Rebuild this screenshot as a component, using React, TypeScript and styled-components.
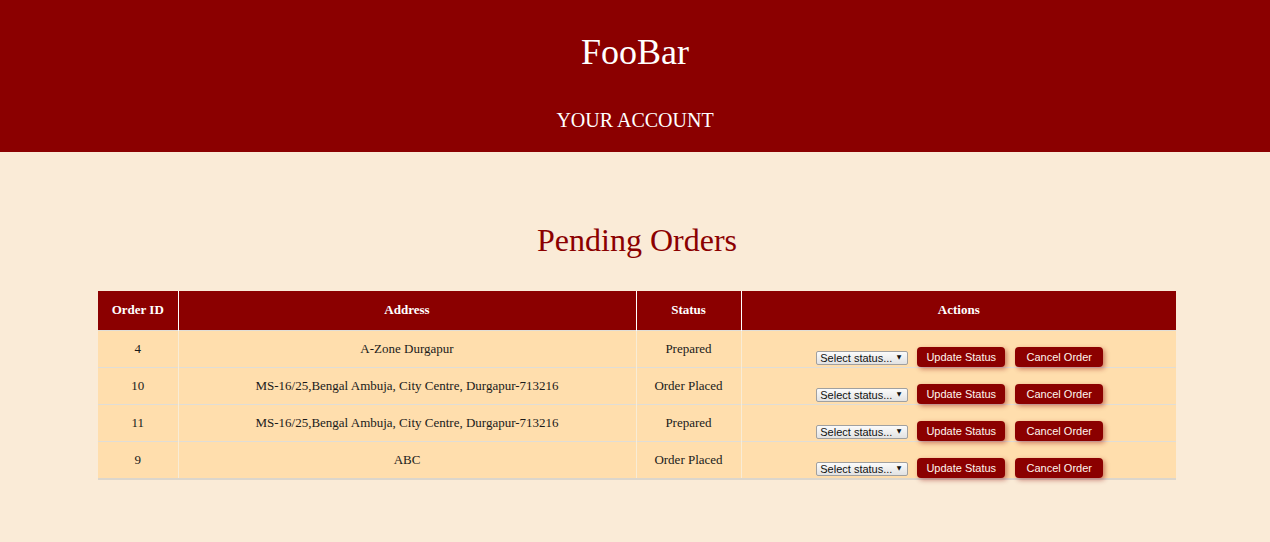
import React from "react";
import styled, { createGlobalStyle } from "styled-components";

interface Order {
  id: string;
  address: string;
  status: string;
}

const orders: Order[] = [
  { id: "4", address: "A-Zone Durgapur", status: "Prepared" },
  { id: "10", address: "MS-16/25,Bengal Ambuja, City Centre, Durgapur-713216", status: "Order Placed" },
  { id: "11", address: "MS-16/25,Bengal Ambuja, City Centre, Durgapur-713216", status: "Prepared" },
  { id: "9", address: "ABC", status: "Order Placed" },
];

const GlobalStyle = createGlobalStyle`
  body {
    margin: 0;
    background-color: #faebd7;
    font-family: "Liberation Serif", "Times New Roman", serif;
  }
`;

const App: React.FC = () => {
  return (
    <>
      <GlobalStyle />
      <Header>
        <Brand>FooBar</Brand>
        <NavLink>YOUR ACCOUNT</NavLink>
      </Header>
      <Main>
        <Title>Pending Orders</Title>
        <OrdersTable>
          <colgroup>
            <col style={{ width: 80 }} />
            <col style={{ width: 458 }} />
            <col style={{ width: 105 }} />
            <col style={{ width: 435 }} />
          </colgroup>
          <thead>
            <tr>
              <Th>Order ID</Th>
              <Th>Address</Th>
              <Th>Status</Th>
              <Th>Actions</Th>
            </tr>
          </thead>
          <tbody>
            {orders.map((order) => (
              <tr key={order.id}>
                <Td>{order.id}</Td>
                <Td>{order.address}</Td>
                <Td>{order.status}</Td>
                <ActionsTd>
                  <ActionsRow>
                    <SelectWrap>
                      <StatusSelect defaultValue="">
                        <option value="">Select status...</option>
                        <option value="prepared">Prepared</option>
                        <option value="delivered">Delivered</option>
                      </StatusSelect>
                      <Arrow>▼</Arrow>
                    </SelectWrap>
                    <ActionButton>Update Status</ActionButton>
                    <ActionButton>Cancel Order</ActionButton>
                  </ActionsRow>
                </ActionsTd>
              </tr>
            ))}
          </tbody>
        </OrdersTable>
      </Main>
    </>
  );
};

const Header = styled.header`
  background-color: #8b0000;
  color: #fff;
  text-align: center;
  padding: 32px 0 20px;
`;

const Brand = styled.h1`
  margin: 0;
  font-size: 36px;
  font-weight: normal;
  line-height: 40px;
`;

const NavLink = styled.div`
  margin-top: 36px;
  font-size: 20px;
  line-height: 24px;
`;

const Main = styled.main`
  padding: 68px 94px 40px 98px;
`;

const Title = styled.h2`
  margin: 0 0 31px;
  text-align: center;
  font-size: 32px;
  font-weight: normal;
  line-height: 40px;
  color: #8b0000;
`;

const OrdersTable = styled.table`
  width: 1078px;
  border-collapse: collapse;
  table-layout: fixed;
  border-bottom: 2px solid #dcd6cc;
`;

const Th = styled.th`
  background-color: #8b0000;
  color: #fff;
  font-size: 13px;
  font-weight: bold;
  line-height: 15px;
  padding: 11px 8px 13px;
  border-left: 1px solid #fff;
  border-right: 1px solid #fff;

  &:first-child {
    border-left: none;
  }
  &:last-child {
    border-right: none;
  }
`;

const Td = styled.td`
  background-color: #ffdead;
  color: #1a1a1a;
  font-size: 13px;
  line-height: 16px;
  text-align: center;
  vertical-align: top;
  padding: 10px 8px;
  border-top: 1px solid #e0ddd6;
  border-left: 1px solid #f8ecd6;
  border-right: 1px solid #f8ecd6;

  &:first-child {
    border-left: none;
  }
`;

const ActionsTd = styled(Td)`
  padding: 16px 8px 0;
  border-right: none;
`;

const ActionsRow = styled.div`
  display: flex;
  justify-content: center;
  align-items: center;
  gap: 9px;
  height: 20px;
  padding-left: 2px;
`;

const SelectWrap = styled.span`
  position: relative;
  display: inline-block;
  width: 92px;
  height: 14px;
`;

const StatusSelect = styled.select`
  appearance: none;
  box-sizing: border-box;
  width: 92px;
  height: 14px;
  margin: 0;
  padding: 0 0 0 3px;
  border: 1px solid #a0a0a0;
  border-radius: 2px;
  background: linear-gradient(#fbfbfb, #e2e2e2);
  color: #111;
  font-family: "Liberation Sans", Arial, sans-serif;
  font-size: 11px;
  line-height: 12px;
`;

const Arrow = styled.span`
  position: absolute;
  right: 7px;
  top: 3px;
  font-size: 6px;
  line-height: 8px;
  color: #111;
  pointer-events: none;
  font-family: "DejaVu Sans", sans-serif;
`;

const ActionButton = styled.button`
  box-sizing: border-box;
  width: 88px;
  height: 20px;
  padding: 0;
  border: none;
  border-radius: 4px;
  background-color: #8b0000;
  color: #fff6ee;
  font-family: "Liberation Sans", Arial, sans-serif;
  font-size: 11px;
  box-shadow: 2px 2px 5px rgba(139, 0, 0, 0.45);
  cursor: pointer;

  & + & {
    margin-left: 1px;
  }

  &:hover {
    background-color: #a30000;
  }
`;

export default App;
